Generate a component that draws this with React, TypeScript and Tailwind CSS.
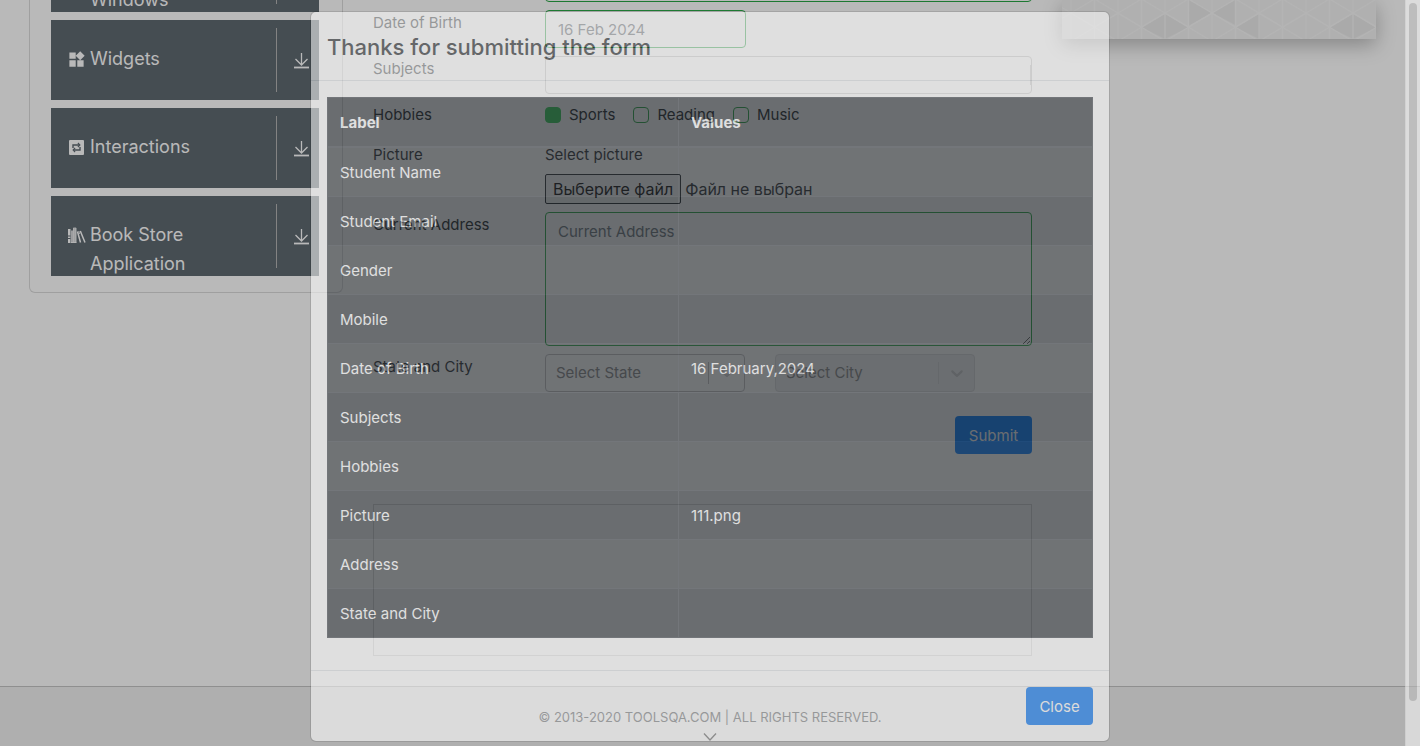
import React, { useRef } from "react";
import { MdWidgets } from "react-icons/md";

function InteractionsIcon() {
  return (
    <svg viewBox="0 0 15 15" className="h-[15px] w-[15px]" aria-hidden="true">
      <rect width="15" height="15" rx="1" fill="#fff" />
      <g fill="none" stroke="#5f6a72" strokeWidth="1.4">
        <path d="M4 8V5h6" />
        <path d="M8.900 3l2 2-2 2" strokeWidth="1.1" />
        <path d="M11 7v3H5" />
        <path d="M6.100 8l-2 2 2 2" strokeWidth="1.1" />
      </g>
    </svg>
  );
}

function BooksIcon() {
  return (
    <svg viewBox="0 0 18 17" className="h-[17px] w-[18px] shrink-0" aria-hidden="true">
      <path d="M0 2h2.500v14H0z" fill="#fff" />
      <path d="M0 9h2.500M0 11.500h2.500" stroke="#5f6a72" strokeWidth="1" />
      <path d="M3 3.500h2V16H3zM5.300 0.500h2.800V16H5.300z" fill="#fff" fillOpacity="0.75" />
      <path d="M5.600 1v14.500M8 1v14.500M3 15.500h5.500" stroke="#fff" strokeWidth="0.8" />
      <path d="M9.500 4.500L12.500 15.500M12.300 4L17 15.500" stroke="#fff" strokeWidth="1.5" />
      <path d="M10.800 4l0.800 3" stroke="#fff" strokeWidth="0.8" />
    </svg>
  );
}

function DownloadIcon() {
  return (
    <svg viewBox="0 0 16 16" className="h-4 w-4" fill="none" stroke="#fff" aria-hidden="true">
      <path d="M7.500 0v12M1.500 6l6 6 6-6" strokeWidth="1.3" />
      <path d="M0 14.500h15" strokeWidth="1.8" />
    </svg>
  );
}

function Chevron() {
  return (
    <svg viewBox="0 0 20 20" className="h-5 w-5" fill="currentColor" aria-hidden="true">
      <path d="M4.516 7.548c0.436-0.446 1.043-0.481 1.576 0l3.908 3.747 3.908-3.747c0.533-0.481 1.141-0.446 1.574 0 0.436 0.445 0.408 1.197 0 1.615-0.406 0.418-4.695 4.502-4.695 4.502-0.217 0.223-0.502 0.335-0.787 0.335s-0.570-0.112-0.789-0.335c0 0-4.287-4.084-4.695-4.502s-0.436-1.170 0-1.615z" />
    </svg>
  );
}

const menu = [
  { label: "Alerts, Frame & Windows", icon: null },
  { label: "Widgets", icon: <MdWidgets size={19} /> },
  { label: "Interactions", icon: <InteractionsIcon /> },
  { label: "Book Store Application", icon: <BooksIcon /> },
];

function Sidebar() {
  return (
    <nav className="flex flex-col gap-2 self-start rounded-b-md border border-t-0 border-[#dbdbdb] pr-[23px] pb-4 pl-[21px]">
      {menu.map((m) => (
        <button key={m.label} type="button" className="flex h-20 items-start bg-[#5f6a72] text-left text-white">
          <span className="mt-[30px] ml-4 flex h-[19px] w-[19px] shrink-0 items-center justify-center">{m.icon}</span>
          <span className="mt-6 ml-1 flex-1 pr-8 text-lg leading-[29px]">{m.label}</span>
          <span className="mt-2 flex h-16 w-[43px] items-center border-l border-[#b5b5b5] pt-[2px] pl-[17px]">
            <DownloadIcon />
          </span>
        </button>
      ))}
    </nav>
  );
}

function Row({ label, htmlFor, children }: { label: string; htmlFor?: string; children: React.ReactNode }) {
  return (
    <div className="flex">
      {htmlFor ? (
        <label htmlFor={htmlFor} className="w-[172px] shrink-0 pt-px">{label}</label>
      ) : (
        <span className="w-[172px] shrink-0 pt-px">{label}</span>
      )}
      <div className="min-w-0 flex-1">{children}</div>
    </div>
  );
}

function Check({ label, checked }: { label: string; checked?: boolean }) {
  return (
    <label className="flex items-center gap-2">
      <input
        type="checkbox"
        defaultChecked={checked}
        className="h-4 w-4 appearance-none rounded border border-[#28a745] bg-white checked:border-[#34ce57] checked:bg-[#34ce57]"
      />
      <span className="pt-px">{label}</span>
    </label>
  );
}

function Picker({ label, disabled }: { label: string; disabled?: boolean }) {
  return (
    <div className="relative w-[200px]">
      <select
        aria-label={label}
        disabled={disabled}
        className="h-[38px] w-full appearance-none rounded border border-[#bfbfbf] bg-white px-[10px] text-[#808080] opacity-100 disabled:border-[#dedede] disabled:bg-[#f2f2f2]"
      >
        <option>{label}</option>
      </select>
      <span
        className={
          disabled
            ? "pointer-events-none absolute inset-y-0 right-0 my-2 flex items-center border-l border-[#dedede] px-2 text-[#cccccc]"
            : "pointer-events-none absolute inset-y-0 right-0 my-2 flex items-center border-l border-[#bfbfbf] px-2 text-[#cccccc]"
        }
      >
        <Chevron />
      </span>
    </div>
  );
}

function PracticeForm() {
  const file = useRef<HTMLInputElement>(null);
  return (
    <div className="pt-8">
      <form className="flex flex-col gap-2" onSubmit={(e) => e.preventDefault()}>
        <Row label="Mobile" htmlFor="mobile">
          <input id="mobile" className="block h-[38px] w-full rounded border border-[#28a745] bg-white px-3" />
        </Row>
        <Row label="Date of Birth" htmlFor="dob">
          <input id="dob" defaultValue="16 Feb 2024" className="block h-[38px] w-[201px] rounded border border-[#28a745] bg-white px-3 text-[#495057]" />
        </Row>
        <Row label="Subjects" htmlFor="subjects">
          <div className="flex h-[38px] items-center rounded border border-[#c4c4c4] bg-white">
            <input id="subjects" className="h-full min-w-0 flex-1 rounded bg-transparent px-2" />
            <span className="h-5 w-px bg-[#cccccc]" />
          </div>
        </Row>
        <Row label="Hobbies">
          <div className="flex h-8 items-start gap-[18px]">
            <Check label="Sports" checked />
            <Check label="Reading" />
            <Check label="Music" />
          </div>
        </Row>
        <Row label="Picture">
          <span className="mb-[7px] block pt-px">Select picture</span>
          <div className="flex items-center gap-1 text-base">
            <input ref={file} type="file" className="hidden" aria-label="Select picture" />
            <button
              type="button"
              onClick={() => file.current?.click()}
              className="h-[30px] rounded-xs border border-[#212529] bg-[#efefef] px-[7px] text-black"
            >
              Выберите файл
            </button>
            <span>Файл не выбран</span>
          </div>
        </Row>
        <Row label="Current Address" htmlFor="address">
          <textarea
            id="address"
            placeholder="Current Address"
            className="block h-[134px] w-full rounded border border-[#28a745] bg-white px-3 py-[7px] placeholder:text-[#6c757d]"
          />
        </Row>
        <Row label="State and City">
          <div className="flex gap-[30px]">
            <Picker label="Select State" />
            <Picker label="Select City" disabled />
          </div>
        </Row>
        <button type="submit" className="mt-4 h-[38px] w-[77px] self-end rounded bg-[#007bff] pt-px text-white">
          Submit
        </button>
      </form>
      <div className="mt-[50px] mb-[30px] h-[152px] border border-[#d8d8d8]" />
    </div>
  );
}

function Banner() {
  const cols = Array.from({ length: 14 }, (_, i) => i);
  return (
    <div className="mt-[68px] h-[39px] self-start shadow-[0_6px_20px_rgba(0,0,0,0.28)]">
      <svg viewBox="0 0 314 39" preserveAspectRatio="none" className="block h-[39px] w-full bg-[#f3f3f3]" aria-hidden="true">
        <g fill="#ebebeb">
          <path d="M79.500 27.300L103 13.500l23.500 13.800L103 39zM173.500 27.300L197 13.500V39zM267.500 27.300L291 13.500l23.500 13.800L291 39z" />
          <path d="M126.500 0l23.500 12.700-23.500 13zM150 12.700L173.500 0v25z" />
        </g>
        <g stroke="#f8f8f8" strokeWidth="1.2" fill="none">
          {cols.map((i) => {
            const x = 9 + i * 23.5;
            const y = i % 2 ? 27.3 : 13;
            return (
              <path
                key={i}
                d={`M${x} 0V39M${x - 23.5} ${y - 14}L${x + 23.5} ${y + 14}M${x - 23.5} ${y + 14}L${x + 23.5} ${y - 14}`}
              />
            );
          })}
        </g>
      </svg>
    </div>
  );
}

const rows = [
  ["Student Name", ""],
  ["Student Email", ""],
  ["Gender", ""],
  ["Mobile", ""],
  ["Date of Birth", "16 February,2024"],
  ["Subjects", ""],
  ["Hobbies", ""],
  ["Picture", "111.png"],
  ["Address", ""],
  ["State and City", ""],
];

function ResultDialog() {
  return (
    <div className="absolute inset-0 flex items-start overflow-hidden opacity-55">
      <div
        role="dialog"
        aria-labelledby="dialog-title"
        className="mx-auto mt-[11px] w-full max-w-[800px] rounded-md border border-black/20 bg-white bg-clip-padding"
      >
        <header className="border-b border-[#dee2e6] px-4 pt-[17px] pb-[15px]">
          <h4 id="dialog-title" className="text-[22px] leading-9 font-medium">Thanks for submitting the form</h4>
        </header>
        <div className="p-4">
          <table className="mb-4 w-full table-fixed border-collapse border border-[#3b4147] bg-[#2a3035] text-left text-white">
            <colgroup>
              <col className="w-[351px]" />
              <col />
            </colgroup>
            <thead>
              <tr>
                <th className="border border-b-2 border-[#3b4147] px-3 pt-[13px] pb-[11px] font-bold">Label</th>
                <th className="border border-b-2 border-[#3b4147] px-3 pt-[13px] pb-[11px] font-bold">Values</th>
              </tr>
            </thead>
            <tbody>
              {rows.map(([k, v]) => (
                <tr key={k} className="h-[49px] odd:bg-white/5">
                  <td className="border border-[#3b4147] px-3 pt-[13px] pb-[11px]">{k}</td>
                  <td className="border border-[#3b4147] px-3 pt-[13px] pb-[11px]">{v}</td>
                </tr>
              ))}
            </tbody>
          </table>
        </div>
        <footer className="flex justify-end border-t border-[#dee2e6] p-4">
          <button type="button" className="h-[38px] w-[67px] rounded bg-[#0072f4] pt-px text-white">
            Close
          </button>
        </footer>
      </div>
      <div className="absolute inset-y-0 right-0 w-[15px] border-l border-[#e8e8e8] bg-[#fafafa] px-[3px] pt-[3px]">
        <div className="h-[94%] w-2 rounded-full bg-[#c1c1c1]" />
      </div>
    </div>
  );
}

export default function App() {
  return (
    <div className="relative h-screen overflow-hidden bg-white font-['Inter','Noto_Sans',sans-serif] text-[15px] leading-6 text-[#212529]">
      <div className="-mt-[68px]">
        <main className="grid grid-cols-[314fr_659fr_314fr] gap-[30px] pr-[44px] pl-[29px]">
          <Sidebar />
          <PracticeForm />
          <Banner />
        </main>
        <footer className="flex h-[100px] flex-col items-center border-t border-[#c6c6c6] bg-[#f1f1f1] pt-5 text-[13px] leading-5">
          <span>© 2013-2020 TOOLSQA.COM | ALL RIGHTS RESERVED.</span>
          <svg viewBox="0 0 14 8" className="mt-[6px] h-2 w-[14px]" fill="none" stroke="#000" strokeWidth="1.3" aria-hidden="true">
            <path d="M1 0.500l6 6.500 6-6.500" />
          </svg>
        </footer>
      </div>
      <div className="absolute inset-0 bg-black/50 opacity-55" />
      <ResultDialog />
    </div>
  );
}
